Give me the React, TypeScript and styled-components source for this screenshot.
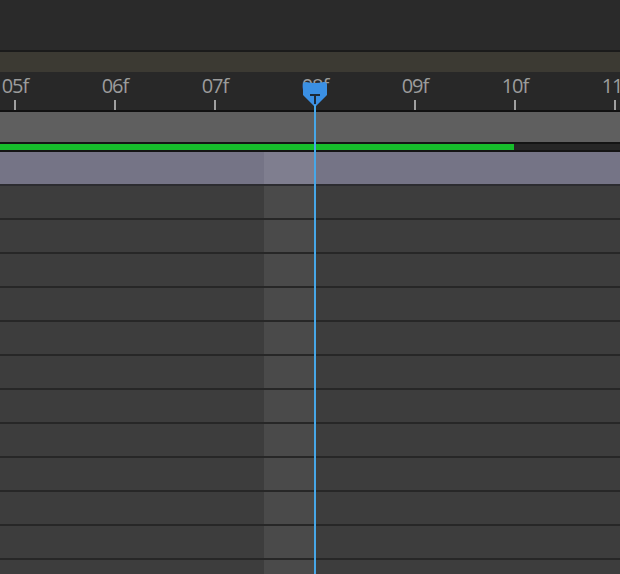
import React from 'react';
import styled, { createGlobalStyle } from 'styled-components';

const GlobalStyle = createGlobalStyle`
	html, body {
		margin: 0;
		padding: 0;
		background: #2a2a2a;
	}
	#root {
		width: 620px;
		height: 574px;
	}
`;

const frames = ['05f', '06f', '07f', '08f', '09f', '10f', '11f'];
const rowCount = 12;
const playheadX = 314;

const Panel = styled.div`
	position: relative;
	width: 620px;
	height: 574px;
	overflow: hidden;
	display: flex;
	flex-direction: column;
	background: #2a2a2a;
	font-family: 'Open Sans', 'DejaVu Sans', sans-serif;
`;

const TopArea = styled.div`
	height: 50px;
	background: #2a2a2a;
	border-bottom: 2px solid #1b1b1b;
	flex: none;
`;

const WorkBand = styled.div`
	height: 20px;
	background: #3c3a33;
	flex: none;
`;

const Ruler = styled.div`
	height: 38px;
	flex: none;
	display: flex;
	background: #282828;
	margin-left: -35px;
	border-bottom: 2px solid #111;
`;

const Frame = styled.div`
	width: 100px;
	flex: none;
	display: flex;
	flex-direction: column;
	align-items: center;
	justify-content: space-between;
`;

const FrameLabel = styled.span`
	margin-top: 2px;
	font-size: 20px;
	line-height: 24px;
	color: #9c9c9c;
	letter-spacing: -1px;
	white-space: nowrap;
`;

const Tick = styled.div`
	width: 2px;
	height: 10px;
	background: #a0a0a0;
`;

const LayerBar = styled.div`
	height: 30px;
	flex: none;
	background: #5f5f5f;
	border-bottom: 2px solid #141414;
`;

const RenderTrack = styled.div`
	height: 6px;
	flex: none;
	display: flex;
	background: #262626;
	border-bottom: 2px solid #141414;
`;

const RenderDone = styled.div`
	background: #16bd2b;
`;

const Row = styled.div<{ $header?: boolean }>`
	height: 32px;
	flex: none;
	display: grid;
	grid-template-columns: 264px 51px 1fr;
	border-bottom: 2px solid ${p => (p.$header ? '#2c2c30' : '#272727')};
	background: ${p => (p.$header ? '#757486' : '#3d3d3d')};
`;

const Cell = styled.div<{ $header?: boolean; $hot?: boolean }>`
	background: ${p =>
		p.$hot ? (p.$header ? '#7f7e8f' : '#4a4a4a') : 'transparent'};
`;

const Playhead = styled.div`
	position: absolute;
	top: 82px;
	bottom: 0;
	left: ${playheadX - 12}px;
	width: 26px;
	display: flex;
	flex-direction: column;
	align-items: center;
	pointer-events: none;
`;

const Needle = styled.div`
	flex: 1;
	width: 2px;
	margin-top: -2px;
	background: #47a7e8;
`;

const Head = () => (
	<svg width="26" height="25" viewBox="0 0 26 25">
		<path
			d="M1 3 Q1 0 4 0 Q13 2 22 0 Q25 0 25 3 L25 13 L13 25 L1 13 Z"
			fill="#3b90e4"
		/>
		<rect x="8" y="12" width="10" height="2" fill="#1d2a38" />
		<rect x="12" y="14" width="2" height="8" fill="#1d2a38" />
	</svg>
);

const LayerRow = ({ header }: { header?: boolean }) => (
	<Row $header={header}>
		<Cell $header={header} />
		<Cell $header={header} $hot />
		<Cell $header={header} />
	</Row>
);

export default function App() {
	return (
		<>
			<GlobalStyle />
			<Panel>
				<TopArea />
				<WorkBand />
				<Ruler>
					{frames.map(f => (
						<Frame key={f}>
							<FrameLabel>{f}</FrameLabel>
							<Tick />
						</Frame>
					))}
				</Ruler>
				<LayerBar />
				<RenderTrack>
					<RenderDone style={{ width: 514 }} />
				</RenderTrack>
				<LayerRow header />
				{Array.from({ length: rowCount }).map((_, i) => (
					<LayerRow key={i} />
				))}
				<Playhead>
					<Head />
					<Needle />
				</Playhead>
			</Panel>
		</>
	);
}
